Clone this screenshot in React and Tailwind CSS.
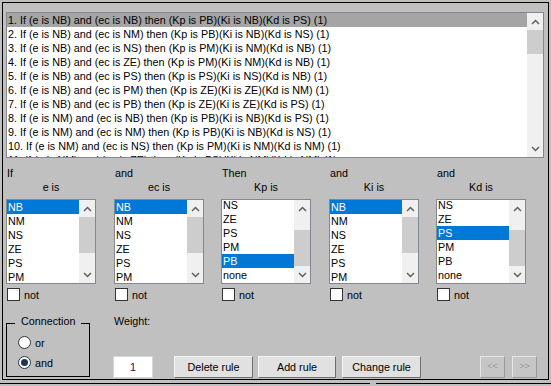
const RULES = [
  "1. If (e is NB) and (ec is NB) then (Kp is PB)(Ki is NB)(Kd is PS) (1)",
  "2. If (e is NB) and (ec is NM) then (Kp is PB)(Ki is NB)(Kd is NS) (1)",
  "3. If (e is NB) and (ec is NS) then (Kp is PM)(Ki is NM)(Kd is NB) (1)",
  "4. If (e is NB) and (ec is ZE) then (Kp is PM)(Ki is NM)(Kd is NB) (1)",
  "5. If (e is NB) and (ec is PS) then (Kp is PS)(Ki is NS)(Kd is NB) (1)",
  "6. If (e is NB) and (ec is PM) then (Kp is ZE)(Ki is ZE)(Kd is NM) (1)",
  "7. If (e is NB) and (ec is PB) then (Kp is ZE)(Ki is ZE)(Kd is PS) (1)",
  "8. If (e is NM) and (ec is NB) then (Kp is PB)(Ki is NB)(Kd is PS) (1)",
  "9. If (e is NM) and (ec is NM) then (Kp is PB)(Ki is NB)(Kd is NS) (1)",
  "10. If (e is NM) and (ec is NS) then (Kp is PM)(Ki is NM)(Kd is NM) (1)",
  "11. If (e is NM) and (ec is ZE) then (Kp is PS)(Ki is NM)(Kd is NM) (1)",
];

const ALL = ["NB", "NM", "NS", "ZE", "PS", "PM", "PB", "none"];

function Chevron({ up }) {
  return (
    <svg width="9" height="6" viewBox="0 0 9 6">
      <polyline
        points={up ? "1,5 4.5,1.5 8,5" : "1,1 4.5,4.5 8,1"}
        fill="none"
        stroke="#606060"
        strokeWidth="1.5"
      />
    </svg>
  );
}

function ScrollBar({ thumbClass }) {
  return (
    <div className="flex w-[16px] shrink-0 flex-col bg-[#f0f0f0]">
      <div className="flex h-[17px] items-center justify-center">
        <Chevron up />
      </div>
      <div className="flex-1">
        <div className={thumbClass} />
      </div>
      <div className="flex h-[17px] items-center justify-center">
        <Chevron />
      </div>
    </div>
  );
}

function Column({ top, label, items, selected, offsetClass, thumbClass, className }) {
  return (
    <div className={"flex w-[90px] flex-col " + className}>
      <div className="h-[14px] pl-[1px] leading-[14px]">{top}</div>
      <div className="h-[14px] text-center leading-[14px]">{label}</div>
      <div className="mt-[5px] flex h-[85px] border border-[#828790] bg-white">
        <div className="flex-1 overflow-hidden">
          <div className={offsetClass}>
            {items.map((it) => (
              <div
                key={it}
                className={
                  "h-[14px] pl-[1px] leading-[14px] " +
                  (it === selected ? "bg-[#0078d7] text-white" : "")
                }
              >
                {it}
              </div>
            ))}
          </div>
        </div>
        <ScrollBar thumbClass={thumbClass} />
      </div>
      <div className="mt-[4px] flex h-[13px] items-center">
        <div className="ml-[1px] h-[13px] w-[13px] border border-[#333333] bg-white" />
        <span className="ml-[4px] leading-[14px]">not</span>
      </div>
    </div>
  );
}

function Btn({ children, className }) {
  return (
    <div
      className={
        "flex h-[22px] items-center justify-center border border-t-[#f4f4f4] border-l-[#f4f4f4] border-r-[#6e6e6e] border-b-[#6e6e6e] bg-[#e1e1e1] " +
        className
      }
    >
      {children}
    </div>
  );
}

function DisBtn({ children, className }) {
  return (
    <div
      className={
        "flex h-[22px] w-[25px] items-center justify-center border border-t-[#e6e6e6] border-l-[#e6e6e6] border-r-[#9a9a9a] border-b-[#9a9a9a] bg-[#c6c6c6] text-[9px] text-[#9a9a9a] " +
        className
      }
    >
      {children}
    </div>
  );
}

function Radio({ checked }) {
  return (
    <div
      className={
        "flex h-[13px] w-[13px] items-center justify-center rounded-full border bg-white " +
        (checked ? "border-[#1c3550]" : "border-[#333333]")
      }
    >
      {checked && <div className="h-[7px] w-[7px] rounded-full bg-[#1c3550]" />}
    </div>
  );
}

export default function App() {
  return (
    <div className="h-[386px] w-[551px] overflow-hidden bg-[#c0c0c0] font-['Liberation_Sans',Arial,sans-serif] text-[10.75px] text-black">
      <div className="ml-[2px] mt-[2px] h-[378px] w-[547px] border border-black pl-[3px] pt-[9px]">
        {/* rule list */}
        <div className="flex h-[146px] w-[538px] border border-[#828790] bg-white">
          <div className="flex-1 overflow-hidden">
            {RULES.map((r, i) => (
              <div
                key={i}
                className={
                  "h-[14px] whitespace-nowrap pl-[1px] leading-[14px] " +
                  (i === 0 ? "bg-[#a5a5a5]" : "")
                }
              >
                {r}
              </div>
            ))}
          </div>
          <ScrollBar thumbClass="h-[24px] bg-[#cdcdcd]" />
        </div>

        {/* columns */}
        <div className="mt-[8px] flex">
          <Column
            top="If"
            label="e is"
            items={ALL}
            selected="NB"
            offsetClass=""
            thumbClass="h-[36px] bg-[#cdcdcd]"
            className=""
          />
          <Column
            top="and"
            label="ec is"
            items={ALL}
            selected="NB"
            offsetClass=""
            thumbClass="h-[36px] bg-[#cdcdcd]"
            className="ml-[18px]"
          />
          <Column
            top="Then"
            label="Kp is"
            items={ALL.slice(2)}
            selected="PB"
            offsetClass="mt-[-2px]"
            thumbClass="mt-[13px] h-[36px] bg-[#cdcdcd]"
            className="ml-[17px]"
          />
          <Column
            top="and"
            label="Ki is"
            items={ALL}
            selected="NB"
            offsetClass=""
            thumbClass="h-[36px] bg-[#cdcdcd]"
            className="ml-[18px]"
          />
          <Column
            top="and"
            label="Kd is"
            items={ALL.slice(2)}
            selected="PS"
            offsetClass="mt-[-2px]"
            thumbClass="mt-[13px] h-[36px] bg-[#cdcdcd]"
            className="ml-[17px]"
          />
        </div>

        {/* bottom */}
        <div className="flex">
          <div className="relative mt-[22px] h-[54px] w-[84px] border border-black">
            <div className="absolute left-[8px] top-[-10px] bg-[#c0c0c0] px-[6px] leading-[14px]">
              Connection
            </div>
            <div className="flex flex-col pl-[11px] pt-[12px]">
              <div className="flex h-[13px] items-center">
                <Radio />
                <span className="ml-[4px] leading-[14px]">or</span>
              </div>
              <div className="mt-[7px] flex h-[13px] items-center">
                <Radio checked />
                <span className="ml-[4px] leading-[14px]">and</span>
              </div>
            </div>
          </div>
          <div className="ml-[23px] flex flex-col">
            <div className="mt-[13px] h-[14px] pl-[1px] leading-[14px]">Weight:</div>
            <div className="mt-[28px] flex">
              <div className="flex h-[22px] w-[40px] items-center justify-center border border-[#d6d6d6] bg-white text-[#400040]">
                1
              </div>
              <Btn className="ml-[21px] w-[79px]">Delete rule</Btn>
              <Btn className="ml-[5px] w-[78px]">Add rule</Btn>
              <Btn className="ml-[6px] w-[79px]">Change rule</Btn>
              <DisBtn className="ml-[59px]">&lt;&lt;</DisBtn>
              <DisBtn className="ml-[7px]">&gt;&gt;</DisBtn>
            </div>
          </div>
        </div>
      </div>
      <div className="mt-[3px] flex">
        <div className="w-[370px] border-t border-black" />
        <div className="w-[6px]" />
        <div className="flex-1 border-t border-black" />
      </div>
    </div>
  );
}
